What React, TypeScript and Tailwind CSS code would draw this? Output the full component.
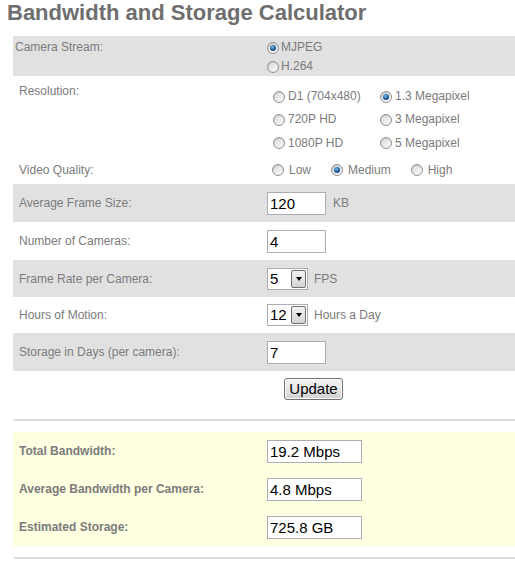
import React from "react";

function Radio({ checked }: { checked?: boolean }) {
  return (
    <span className="inline-flex w-[12px] h-[12px] shrink-0 rounded-full border border-[#929292] bg-gradient-to-br from-[#d9d9d9] to-[#fbfbfb] items-center justify-center shadow-[inset_0_1px_1px_rgba(0,0,0,0.12)]">
      {checked && (
        <span className="w-[6px] h-[6px] rounded-full bg-[radial-gradient(circle_at_40%_35%,#7cc0f0_0%,#1d5f99_50%,#0b2f55_100%)]" />
      )}
    </span>
  );
}

function RadioLabel({ checked, label, gap = "gap-[3px]" }: { checked?: boolean; label: string; gap?: string }) {
  return (
    <span className={`inline-flex items-center ${gap}`}>
      <Radio checked={checked} />
      <span>{label}</span>
    </span>
  );
}

function TextBox({ value, w }: { value: string; w: string }) {
  return (
    <div
      className={`${w} h-[23px] border border-[#abadb3] bg-white text-black font-normal text-[15px] leading-[21px] pl-[2px]`}
    >
      {value}
    </div>
  );
}

function Select({ value }: { value: string }) {
  return (
    <div className="w-[41px] h-[22px] border border-[#abadb3] bg-white flex items-center justify-between">
      <span className="text-black text-[15px] leading-[20px] pl-[2px]">{value}</span>
      <span className="w-[15px] h-[18px] mr-[1px] border border-[#707070] rounded-[2px] bg-gradient-to-b from-[#f3f3f3] to-[#d4d4d4] flex items-center justify-center">
        <span className="w-0 h-0 border-l-[3px] border-r-[3px] border-t-[4px] border-l-transparent border-r-transparent border-t-black" />
      </span>
    </div>
  );
}

function Row({
  gray,
  h,
  label,
  children,
}: {
  gray?: boolean;
  h: string;
  label: string;
  children: React.ReactNode;
}) {
  return (
    <div className={`flex items-center ${h} ${gray ? "bg-[#e1e1e1]" : ""}`}>
      <div className="w-[250px] pl-[6px]">{label}</div>
      <div className="pl-[4px] flex items-center">{children}</div>
    </div>
  );
}

export default function App() {
  return (
    <div className="w-[515px] h-[570px] bg-white font-['Liberation_Sans',Arial,sans-serif] text-[12px] leading-[14px] text-[#7b7b7b] overflow-hidden">
      <h1 className="pl-[7px] text-[22px] leading-[25px] font-bold text-[#6e6e6e]">
        Bandwidth and Storage Calculator
      </h1>
      <div className="ml-[13px] mt-[11px]">
        {/* Camera Stream */}
        <div className="flex h-[40px] bg-[#e1e1e1]">
          <div className="w-[250px] pl-[2px] pt-[4px]">Camera Stream:</div>
          <div className="pl-[4px] pt-[2px] flex flex-col leading-[19px]">
            <RadioLabel checked label="MJPEG" gap="gap-[2px]" />
            <RadioLabel label="H.264" gap="gap-[2px]" />
          </div>
        </div>

        {/* Resolution */}
        <div className="flex h-[79px]">
          <div className="w-[250px] pl-[6px] pt-[8px]">Resolution:</div>
          <div className="pl-[10px] pt-[9px] grid grid-cols-[107px_auto] leading-[21px]">
            <RadioLabel label="D1 (704x480)" />
            <RadioLabel checked label="1.3 Megapixel" />
            <RadioLabel label="720P HD" />
            <RadioLabel label="3 Megapixel" />
            <RadioLabel label="1080P HD" />
            <RadioLabel label="5 Megapixel" />
          </div>
        </div>

        {/* Video Quality */}
        <div className="flex items-center h-[29px]">
          <div className="w-[250px] pl-[6px]">Video Quality:</div>
          <div className="pl-[9px] flex items-center gap-[20px]">
            <RadioLabel label="Low" gap="gap-[5px]" />
            <RadioLabel checked label="Medium" gap="gap-[5px]" />
            <RadioLabel label="High" gap="gap-[5px]" />
          </div>
        </div>

        <Row gray h="h-[38px]" label="Average Frame Size:">
          <TextBox value="120" w="w-[59px]" />
          <span className="ml-[7px]">KB</span>
        </Row>
        <Row h="h-[38px]" label="Number of Cameras:">
          <TextBox value="4" w="w-[59px]" />
        </Row>
        <Row gray h="h-[37px]" label="Frame Rate per Camera:">
          <Select value="5" />
          <span className="ml-[6px]">FPS</span>
        </Row>
        <Row h="h-[36px]" label="Hours of Motion:">
          <Select value="12" />
          <span className="ml-[6px]">Hours a Day</span>
        </Row>
        <Row gray h="h-[38px]" label="Storage in Days (per camera):">
          <TextBox value="7" w="w-[59px]" />
        </Row>

        {/* Update */}
        <div className="flex pt-[7px]">
          <div className="w-[271px]" />
          <button className="w-[59px] h-[22px] border border-[#707070] rounded-[3px] bg-gradient-to-b from-[#f4f4f4] via-[#e6e6e6] to-[#d0d0d0] text-black text-[15px] leading-[18px] shadow-[inset_0_0_0_1px_#fcfcfc]">
            Update
          </button>
        </div>

        <div className="mt-[19px] ml-[1px] h-[2px] bg-[#dcdcdc]" />

        {/* Results */}
        <div className="mt-[11px] bg-[#ffffe1] font-bold">
          <Row h="h-[38px]" label="Total Bandwidth:">
            <TextBox value="19.2 Mbps" w="w-[95px]" />
          </Row>
          <Row h="h-[38px]" label="Average Bandwidth per Camera:">
            <TextBox value="4.8 Mbps" w="w-[95px]" />
          </Row>
          <Row h="h-[38px]" label="Estimated Storage:">
            <TextBox value="725.8 GB" w="w-[95px]" />
          </Row>
        </div>

        <div className="mt-[11px] ml-[1px] h-[2px] bg-[#dcdcdc]" />
      </div>
    </div>
  );
}
